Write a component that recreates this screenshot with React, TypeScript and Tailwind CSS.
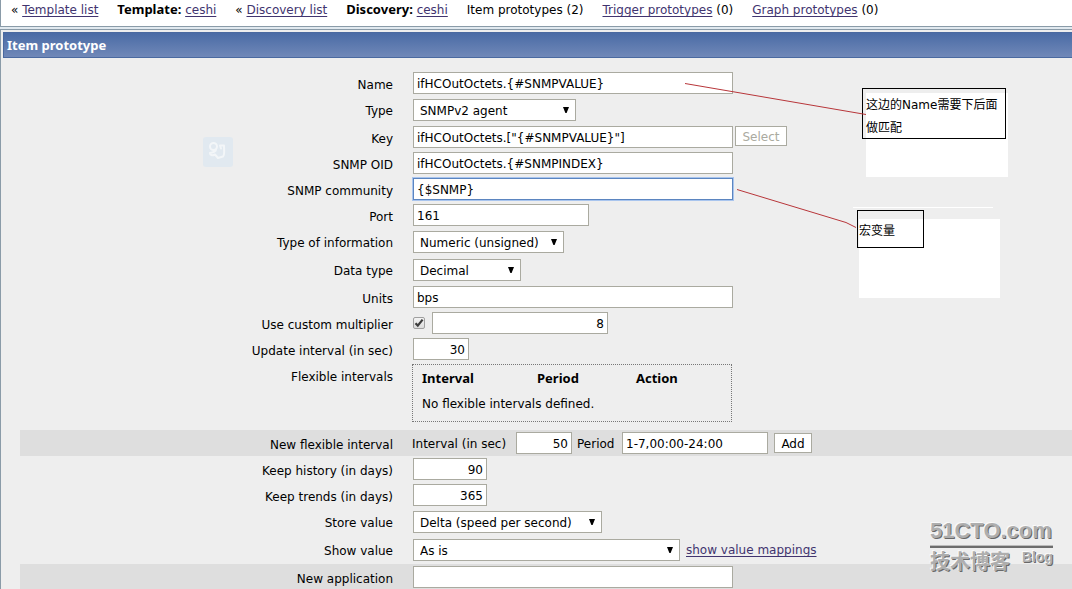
import React from "react";
import clsx from "clsx";

interface RowProps {
  label: string;
  htmlFor?: string;
  kind?: "input" | "select" | "block";
  shaded?: boolean;
  children: React.ReactNode;
}

const Row = ({ label, htmlFor, kind = "input", shaded, children }: RowProps) => (
  <div
    className={clsx(
      "flex",
      kind === "block" ? "items-start pt-0.5 pb-2" : "items-center",
      kind === "input" && "h-[26px]",
      kind === "select" && "h-7",
      shaded && "bg-[#dedede]"
    )}
  >
    <label
      htmlFor={htmlFor}
      className={clsx(
        "w-[373px] shrink-0 text-right leading-5",
        kind === "input" && "pt-1",
        kind === "select" && "pt-0.5",
        kind === "block" && "pt-[3px]"
      )}
    >
      {label}
    </label>
    <div className="flex items-center pl-[19px]">{children}</div>
  </div>
);

interface TextFieldProps extends React.InputHTMLAttributes<HTMLInputElement> {
  active?: boolean;
}

const TextField = ({ className, active, ...props }: TextFieldProps) => (
  <input
    type="text"
    className={clsx(
      "mx-px h-[22px] border bg-white px-[3px] pt-0.5 outline-none",
      active
        ? "border-[#5b85c0] shadow-[0_0_0_1px_#a9c5ee]"
        : "border-[#aaaaa0]",
      className
    )}
    {...props}
  />
);

interface DropDownProps {
  id: string;
  options: string[];
  className: string;
}

const DropDown = ({ id, options, className }: DropDownProps) => (
  <div className={clsx("relative mx-px", className)}>
    <select
      id={id}
      className="block h-[22px] w-full appearance-none border border-[#aaaaa0] bg-white pt-0.5 pl-1.5 outline-none"
    >
      {options.map((option) => (
        <option key={option}>{option}</option>
      ))}
    </select>
    <svg
      viewBox="0 0 6 6"
      className="pointer-events-none absolute top-2 right-[7px] h-1.5 w-1.5 overflow-visible"
    >
      <path d="M0 0h6L3.6 6H2.4z" fill="#000" />
    </svg>
  </div>
);

const Button = ({
  className,
  ...props
}: React.ButtonHTMLAttributes<HTMLButtonElement>) => (
  <button
    type="button"
    className={clsx(
      "h-5 border border-[#aaaaa0] bg-white pt-px leading-[18px] disabled:text-[#aaaaa0]",
      className
    )}
    {...props}
  />
);

const Link = ({ children }: { children: React.ReactNode }) => (
  <a href="#" className="text-[#41346f] underline underline-offset-2">
    {children}
  </a>
);

const Strong = ({ children }: { children: React.ReactNode }) => (
  <span className="font-['Noto_Sans',sans-serif] text-[13px] font-bold">{children}</span>
);

const NavBar = () => (
  <nav className="flex h-[27px] items-baseline gap-[19px] border-b border-l border-[#8a9ba8] bg-white pl-2.5 leading-[18px] whitespace-nowrap">
    <span>
      « <Link>Template list</Link>
    </span>
    <span>
      <Strong>Template:</Strong> <Link>ceshi</Link>
    </span>
    <span>
      « <Link>Discovery list</Link>
    </span>
    <span>
      <Strong>Discovery:</Strong> <Link>ceshi</Link>
    </span>
    <span>Item prototypes (2)</span>
    <span>
      <Link>Trigger prototypes</Link> (0)
    </span>
    <span>
      <Link>Graph prototypes</Link> (0)
    </span>
  </nav>
);

const Notes = () => (
  <div className="font-['DejaVu_Sans','Noto_Sans_CJK_SC',sans-serif] text-[12px] leading-[23px]">
    <div className="absolute top-[93px] left-[866px] h-[84px] w-[142px] bg-white" />
    <div className="absolute top-[88px] left-[862px] h-[51px] w-[144px] border border-black pt-[5px] pl-[3px]">
      这边的Name需要下后面
      <br />
      做匹配
    </div>
    <div className="absolute top-[207px] left-[853px] h-px w-[140px] bg-white" />
    <div className="absolute top-[219px] left-[859px] h-[79px] w-[141px] bg-white" />
    <div className="absolute top-[210px] left-[857px] h-[38px] w-[67px] border border-black pt-[9px] pl-px">
      宏变量
    </div>
    <svg
      className="pointer-events-none absolute top-0 left-0"
      width="900"
      height="240"
      fill="none"
      stroke="#b8363a"
    >
      <path d="M685 83.500L866 114.500" />
      <path d="M737 189.500L846 222.500L856 227.500" />
    </svg>
  </div>
);

const SearchBadge = () => (
  <svg
    className="absolute top-[137px] left-[203px]"
    width="30"
    height="30"
    viewBox="0 0 30 30"
    fill="none"
  >
    <rect width="30" height="30" rx="3" fill="#e1e9f0" />
    <g stroke="#f3f6f8" strokeWidth="2" strokeLinejoin="round" strokeLinecap="round">
      <circle cx="10.500" cy="9.500" r="3.500" />
      <path d="M13 12.500c0 2-2 2.500-6 3.500c0 2 2 3 5 1.500l3 3.500 5-1.500c2-2 1-5 1-11h-4l1 3" />
    </g>
  </svg>
);

const Watermark = () => (
  <div className="pointer-events-none absolute top-[516px] left-[930px] w-[123px] text-[#aeaeae] [text-shadow:-1px_-1px_0_#fafafa,1px_1px_0_#686868]">
    <div className="font-['Liberation_Sans',sans-serif] text-[22px] leading-[29px] font-bold whitespace-nowrap">
      51CTO.com
    </div>
    <div className="h-[3px] border-t border-b-2 border-t-[#bbb] border-b-[#6d6d6d]" />
    <div className="flex items-start justify-between">
      <span className="font-['Noto_Sans_CJK_SC',sans-serif] text-[20px] leading-[26px] font-bold">
        技术博客
      </span>
      <span className="font-['Liberation_Sans',sans-serif] text-[14px] leading-[18px] font-bold">
        Blog
      </span>
    </div>
  </div>
);

export default function App() {
  return (
    <div className="relative h-screen overflow-hidden bg-[#e1e9ef] font-['DejaVu_Sans','Noto_Sans_CJK_SC',sans-serif] text-[12px] text-black">
      <NavBar />
      <main className="mt-0.5 border-t border-l border-[#8a9ba8] bg-[#eeeeee]">
        <h1 className="mt-0.5 ml-0.5 h-[26px] border border-r-0 border-[#4a69a0] bg-linear-to-b from-[#4a6ba5] to-[#7088b8] pl-[3px] leading-[25px] text-white">
          <Strong>Item prototype</Strong>
        </h1>
        <form className="pt-3 pl-[19px]">
          <Row label="Name" htmlFor="name">
            <TextField id="name" className="w-80" defaultValue="ifHCOutOctets.{#SNMPVALUE}" />
          </Row>
          <Row label="Type" htmlFor="type" kind="select">
            <DropDown id="type" className="w-[163px]" options={["SNMPv2 agent"]} />
          </Row>
          <Row label="Key" htmlFor="key">
            <TextField id="key" className="w-80" defaultValue={'ifHCOutOctets.["{#SNMPVALUE}"]'} />
            <Button className="ml-px w-[52px] self-start" disabled>
              Select
            </Button>
          </Row>
          <Row label="SNMP OID" htmlFor="oid">
            <TextField id="oid" className="w-80" defaultValue="ifHCOutOctets.{#SNMPINDEX}" />
          </Row>
          <Row label="SNMP community" htmlFor="community">
            <TextField id="community" className="w-80" active defaultValue="{$SNMP}" />
          </Row>
          <Row label="Port" htmlFor="port">
            <TextField id="port" className="w-44" defaultValue="161" />
          </Row>
          <Row label="Type of information" htmlFor="value-type" kind="select">
            <DropDown id="value-type" className="w-[151px]" options={["Numeric (unsigned)"]} />
          </Row>
          <Row label="Data type" htmlFor="data-type" kind="select">
            <DropDown id="data-type" className="w-[108px]" options={["Decimal"]} />
          </Row>
          <Row label="Units" htmlFor="units">
            <TextField id="units" className="w-80" defaultValue="bps" />
          </Row>
          <Row label="Use custom multiplier" htmlFor="multiplier">
            <span className="relative ml-px mr-1.5 size-3">
              <input
                id="multiplier"
                type="checkbox"
                defaultChecked
                className="block size-3 appearance-none rounded-[2px] border border-[#a0a0a0] bg-linear-to-b from-[#f4f4f4] to-[#dcdcdc]"
              />
              <svg
                viewBox="0 0 12 12"
                className="pointer-events-none absolute inset-0"
                fill="none"
                stroke="#3c3c3c"
                strokeWidth="2.200"
              >
                <path d="M2.500 6.200L4.800 8.600L9.600 2.600" />
              </svg>
            </span>
            <TextField aria-label="Multiplier" className="w-44 text-right" defaultValue="8" />
          </Row>
          <Row label="Update interval (in sec)" htmlFor="delay">
            <TextField id="delay" className="w-14 text-right" defaultValue="30" />
          </Row>
          <Row label="Flexible intervals" kind="block">
            <div className="h-[58px] w-80 border border-dotted border-[#777] pt-px pl-[9px]">
              <table className="w-full table-fixed text-left leading-[25px]">
                <thead>
                  <tr>
                    <th className="w-[115px]">
                      <Strong>Interval</Strong>
                    </th>
                    <th className="w-[99px]">
                      <Strong>Period</Strong>
                    </th>
                    <th>
                      <Strong>Action</Strong>
                    </th>
                  </tr>
                </thead>
                <tbody>
                  <tr>
                    <td colSpan={3}>No flexible intervals defined.</td>
                  </tr>
                </tbody>
              </table>
            </div>
          </Row>
          <Row label="New flexible interval" htmlFor="new-delay" shaded>
            <label htmlFor="new-delay" className="w-[103px] pt-0.5">
              Interval (in sec)
            </label>
            <TextField id="new-delay" className="w-14 text-right" defaultValue="50" />
            <label htmlFor="new-period" className="w-12 pt-0.5 pl-1">
              Period
            </label>
            <TextField id="new-period" className="w-[146px]" defaultValue="1-7,00:00-24:00" />
            <Button className="ml-[5px] w-[38px]">Add</Button>
          </Row>
          <Row label="Keep history (in days)" htmlFor="history">
            <TextField id="history" className="w-[74px] text-right" defaultValue="90" />
          </Row>
          <Row label="Keep trends (in days)" htmlFor="trends">
            <TextField id="trends" className="w-[74px] text-right" defaultValue="365" />
          </Row>
          <Row label="Store value" htmlFor="store" kind="select">
            <DropDown id="store" className="w-[189px]" options={["Delta (speed per second)"]} />
          </Row>
          <Row label="Show value" htmlFor="show" kind="select">
            <DropDown id="show" className="mr-1.5 w-[267px]" options={["As is"]} />
            <Link>show value mappings</Link>
          </Row>
          <Row label="New application" htmlFor="application" shaded>
            <TextField id="application" className="w-80" />
          </Row>
        </form>
      </main>
      <SearchBadge />
      <Notes />
      <Watermark />
    </div>
  );
}
